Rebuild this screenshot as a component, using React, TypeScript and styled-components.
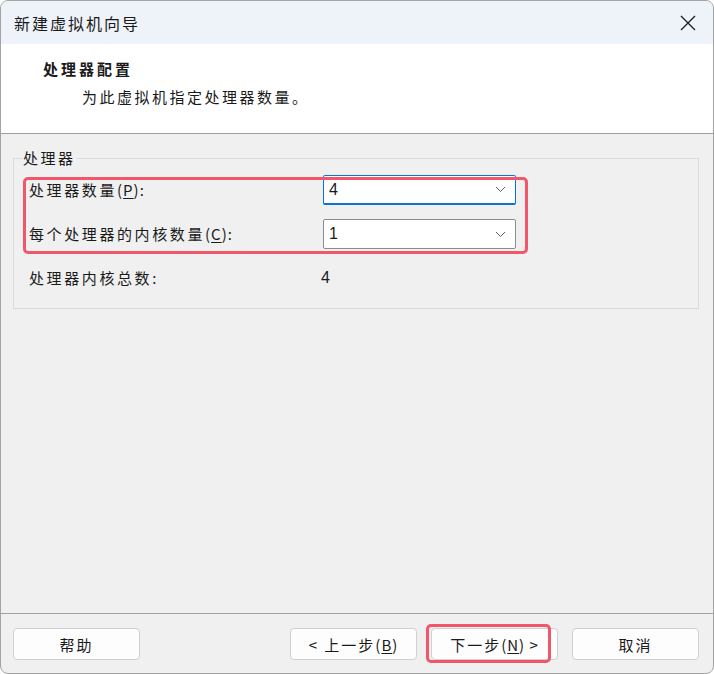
import React from 'react'
import styled, { createGlobalStyle } from 'styled-components'

const GlobalStyle = createGlobalStyle`
  html, body {
    margin: 0;
    padding: 0;
    background: #ffffff;
  }
  * {
    box-sizing: border-box;
  }
`

const cjk = `"Noto Sans CJK SC", "Noto Sans", sans-serif`

const Window = styled.div`
  width: 714px;
  height: 674px;
  border: 1px solid #a3a3a3;
  border-radius: 8px;
  overflow: hidden;
  display: flex;
  flex-direction: column;
  background: #f0f0f0;
  font-family: ${cjk};
  color: #1a1a1a;
`

const TitleBar = styled.div`
  height: 43px;
  flex-shrink: 0;
  display: flex;
  align-items: center;
  justify-content: space-between;
  padding: 0 16px 0 13px;
  background: #eef2f9;
`

const Title = styled.div`
  font-size: 16px;
  letter-spacing: 2px;
  line-height: 20px;
`

const CloseBtn = styled.div`
  width: 18px;
  height: 18px;
  display: flex;
  align-items: center;
  justify-content: center;
`

const Header = styled.div`
  height: 90px;
  flex-shrink: 0;
  background: #ffffff;
  border-bottom: 1px solid #a0a0a0;
  padding: 15px 0 0 42px;
`

const HeaderTitle = styled.div`
  font-size: 15px;
  font-weight: 700;
  letter-spacing: 3px;
  line-height: 20px;
`

const HeaderSub = styled.div`
  margin: 8px 0 0 39px;
  font-size: 15px;
  letter-spacing: 2.5px;
  line-height: 20px;
`

const Content = styled.div`
  flex: 1;
  padding: 14px 14px 0 12px;
`

const GroupBox = styled.fieldset`
  margin: 0;
  padding: 7px 15px 15px 15px;
  border: 1px solid #dadada;
  border-radius: 0;
`

const Legend = styled.legend`
  padding: 0 1px;
  margin-left: -7px;
  font-size: 15px;
  letter-spacing: 2.5px;
  line-height: 20px;
`

const Rows = styled.div`
  position: relative;
  display: flex;
  flex-direction: column;
  gap: 14px;
`

const Highlight = styled.div`
  position: absolute;
  left: -6px;
  top: 2px;
  width: 505px;
  height: 77px;
  border: 3px solid #f2566b;
  border-radius: 5px;
  pointer-events: none;
`

const Row = styled.div`
  height: 30px;
  display: flex;
  align-items: center;
`

const Label = styled.div`
  width: 294px;
  font-size: 15px;
  letter-spacing: 2.6px;
  line-height: 20px;
`

const Latin = styled.span`
  letter-spacing: 1px;
`

const Key = styled.span`
  text-decoration: underline;
  text-underline-offset: 2px;
`

const Combo = styled.div<{ $focused?: boolean }>`
  width: 193px;
  height: 30px;
  display: flex;
  align-items: center;
  justify-content: space-between;
  padding: 0 9px 0 5px;
  background: #ffffff;
  border: 1px solid ${p => (p.$focused ? '#0a74d4' : '#8c8c8c')};
  border-bottom-width: ${p => (p.$focused ? '2px' : '1px')};
  border-radius: 2px;
  font-family: "Liberation Sans", Arial, sans-serif;
  font-size: 16px;
`

const Value = styled.div`
  margin-left: -2px;
  font-family: "Liberation Sans", Arial, sans-serif;
  font-size: 16px;
`

const Footer = styled.div`
  height: 60px;
  flex-shrink: 0;
  border-top: 1px solid #a0a0a0;
  display: flex;
  align-items: flex-start;
  justify-content: space-between;
  padding: 14px 14px 0 12px;
`

const ButtonGroup = styled.div`
  display: flex;
  align-items: flex-start;
  gap: 14px;
`

const Button = styled.div`
  width: 127px;
  height: 32px;
  display: flex;
  align-items: center;
  justify-content: center;
  background: #fdfdfd;
  border: 1px solid #d0d0d0;
  border-radius: 4px;
  font-size: 15px;
  letter-spacing: 2px;
  color: #1a1a1a;
`

const Marked = styled.div`
  position: relative;

  &::after {
    content: '';
    position: absolute;
    left: -5px;
    top: -4px;
    right: 7px;
    bottom: -3px;
    border: 3px solid #f2566b;
    border-radius: 5px;
    pointer-events: none;
  }
`

const Chevron = () => (
  <svg width="11" height="7" viewBox="0 0 11 7">
    <path d="M1 1l4.5 4.5L10 1" fill="none" stroke="#606060" strokeWidth="1" />
  </svg>
)

const CloseIcon = () => (
  <svg width="16" height="16" viewBox="0 0 16 16">
    <path d="M1 1l14 14M15 1L1 15" stroke="#1a1a1a" strokeWidth="1.3" />
  </svg>
)

const App = () => {
  return (
    <>
      <GlobalStyle />
      <Window>
        <TitleBar>
          <Title>新建虚拟机向导</Title>
          <CloseBtn>
            <CloseIcon />
          </CloseBtn>
        </TitleBar>

        <Header>
          <HeaderTitle>处理器配置</HeaderTitle>
          <HeaderSub>为此虚拟机指定处理器数量。</HeaderSub>
        </Header>

        <Content>
          <GroupBox>
            <Legend>处理器</Legend>
            <Rows>
              <Highlight />
              <Row>
                <Label>
                  处理器数量<Latin>(<Key>P</Key>):</Latin>
                </Label>
                <Combo $focused>
                  4
                  <Chevron />
                </Combo>
              </Row>
              <Row>
                <Label>
                  每个处理器的内核数量<Latin>(<Key>C</Key>):</Latin>
                </Label>
                <Combo>
                  1
                  <Chevron />
                </Combo>
              </Row>
              <Row>
                <Label>处理器内核总数:</Label>
                <Value>4</Value>
              </Row>
            </Rows>
          </GroupBox>
        </Content>

        <Footer>
          <Button>帮助</Button>
          <ButtonGroup>
            <Button>
              &lt; 上一步<Latin>(<Key>B</Key>)</Latin>
            </Button>
            <Marked>
              <Button>
                下一步<Latin>(<Key>N</Key>) &gt;</Latin>
              </Button>
            </Marked>
            <Button>取消</Button>
          </ButtonGroup>
        </Footer>
      </Window>
    </>
  )
}

export default App
